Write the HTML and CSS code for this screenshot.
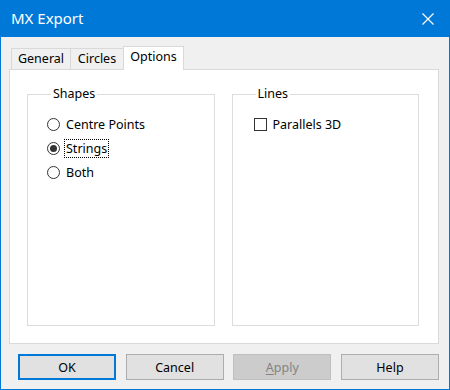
FILE: index.html
```html
<!DOCTYPE html>
<html>
<head>
<meta charset="utf-8">
<link rel="stylesheet" href="styles.css">
</head>
<body>
<div class="window">
  <div class="titlebar">
    <span class="title">MX Export</span>
    <svg class="close" width="12" height="12" viewBox="0 0 12 12"><path d="M0.5 0.5 L11.5 11.5 M11.5 0.5 L0.5 11.5" stroke="#fff" stroke-width="1.2" fill="none"/></svg>
  </div>
  <div class="body">
    <div class="tabs">
      <div class="tab t-general">General</div>
      <div class="tab t-circles">Circles</div>
      <div class="tab active t-options">Options</div>
    </div>
    <div class="panel">
      <fieldset class="group">
        <legend>Shapes</legend>
        <div class="opt"><span class="radio"></span><span class="lbl">Centre Points</span></div>
        <div class="opt"><span class="radio checked"></span><span class="lbl focus">Strings</span></div>
        <div class="opt"><span class="radio"></span><span class="lbl">Both</span></div>
      </fieldset>
      <fieldset class="group">
        <legend>Lines</legend>
        <div class="opt check-opt"><span class="check"></span><span class="lbl">Parallels 3D</span></div>
      </fieldset>
    </div>
    <div class="buttons">
      <div class="btn default">OK</div>
      <div class="btn">Cancel</div>
      <div class="btn disabled"><u>A</u>pply</div>
      <div class="btn">Help</div>
    </div>
  </div>
</div>
</body>
</html>
```
FILE: styles.css
```css
html, body {
  margin: 0;
  padding: 0;
}
body {
  font-family: "Noto Sans", "Open Sans", sans-serif;
  font-size: 12.5px;
  color: #000;
  background: #f0f0f0;
}
.window {
  width: 450px;
  height: 390px;
  box-sizing: border-box;
  border: 1px solid #0078d7;
  background: #f0f0f0;
  display: flex;
  flex-direction: column;
}
.titlebar {
  height: 36px;
  background: #0078d7;
  display: flex;
  align-items: center;
  padding-left: 10px;
  padding-right: 15px;
}
.title {
  color: #fff;
  font-size: 15px;
  flex: 1;
  margin-top: -2px;
}
.close {
  display: block;
  margin-top: -1px;
}
.body {
  flex: 1;
  display: flex;
  flex-direction: column;
  padding: 9px 10px 9px 8px;
}
.tabs {
  display: flex;
  align-items: flex-end;
  height: 23px;
  padding-left: 2px;
  position: relative;
  z-index: 1;
}
.tab {
  height: 21px;
  box-sizing: border-box;
  border: 1px solid #d9d9d9;
  border-bottom: none;
  background: #f0f0f0;
  display: flex;
  align-items: center;
  justify-content: center;
  line-height: 1;
  padding-top: 1px;
}
.t-general { width: 60px; }
.t-circles { width: 53px; border-left: none; }
.t-options { width: 61px; }
.tab.active {
  height: 24px;
  margin-bottom: -1px;
  background: #fff;
  padding-top: 0;
  padding-bottom: 3px;
  margin-left: -1px;
}
.panel {
  height: 275px;
  box-sizing: border-box;
  border: 1px solid #d9d9d9;
  background: #fff;
  display: flex;
  padding: 16px 19px 0 17px;
  gap: 17px;
}
.group {
  margin: 0;
  width: 188px;
  height: 240px;
  box-sizing: border-box;
  border: 1px solid #dcdcdc;
  padding: 10px 0 0 19px;
}
.group legend {
  padding: 0 2px;
  margin-left: 4px;
  line-height: 16px;
}
.opt {
  display: flex;
  align-items: center;
  height: 24px;
}
.radio {
  width: 13px;
  height: 13px;
  box-sizing: border-box;
  border: 1px solid #333;
  border-radius: 50%;
  background: #fff;
  display: flex;
  align-items: center;
  justify-content: center;
  margin-right: 6px;
}
.radio.checked::after {
  content: "";
  width: 7px;
  height: 7px;
  border-radius: 50%;
  background: #333;
}
.lbl {
  line-height: 17px;
  padding: 0 1px;
  border: 1px dotted transparent;
  margin-left: -2px;
}
.lbl.focus {
  border-color: #000;
}
.check-opt {
  padding-left: 2px;
}
.check {
  width: 13px;
  height: 13px;
  box-sizing: border-box;
  border: 1px solid #333;
  background: #fff;
  margin-right: 6px;
}
.buttons {
  margin-top: 10px;
  display: flex;
  justify-content: space-between;
  padding-left: 9px;
}
.btn {
  width: 98px;
  height: 26px;
  box-sizing: border-box;
  border: 1px solid #adadad;
  background: #e1e1e1;
  display: flex;
  align-items: center;
  justify-content: center;
}
.btn.default {
  border: 2px solid #0078d7;
}
.btn.disabled {
  background: #cccccc;
  border-color: #bfbfbf;
  color: #838383;
}
.btn.disabled u {
  text-decoration: underline;
  text-underline-offset: 2px;
}
```
